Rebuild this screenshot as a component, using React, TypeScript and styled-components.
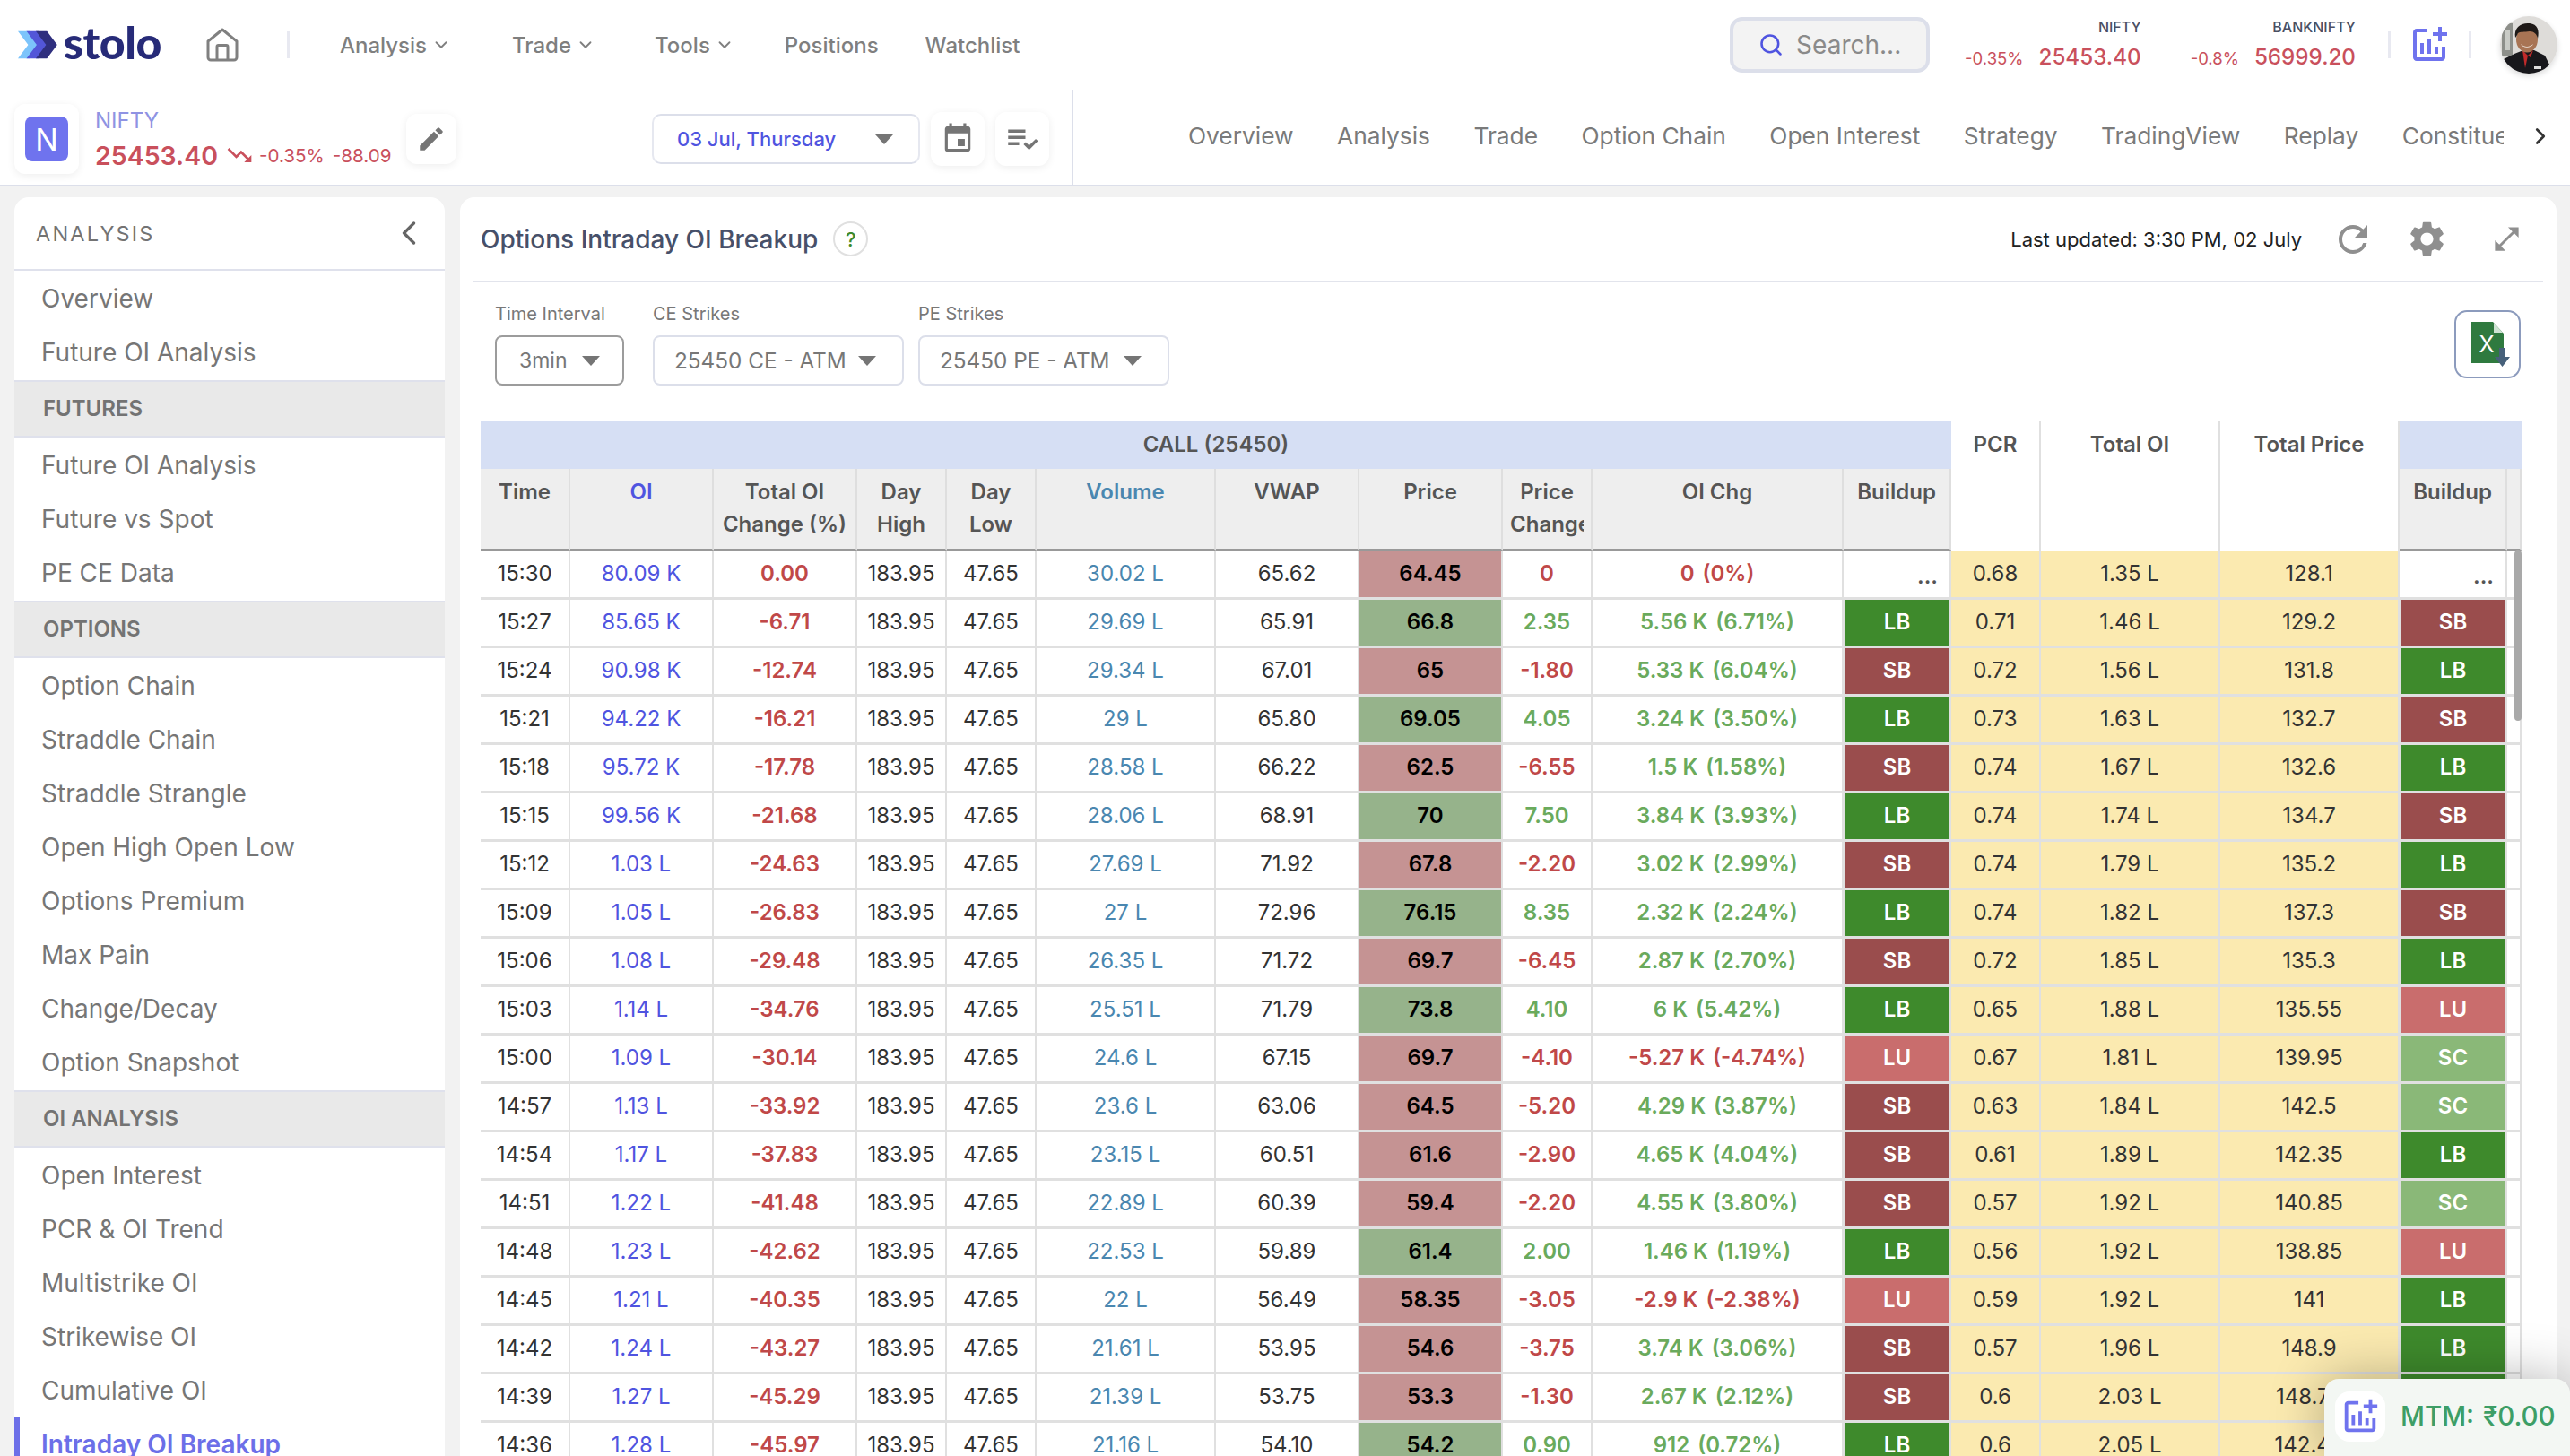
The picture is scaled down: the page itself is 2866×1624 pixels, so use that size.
import React from "react";
import styled, { createGlobalStyle } from "styled-components";
import { ChevronDown, ChevronLeft, ChevronRight, Search } from "lucide-react";
import { MdAddchart, MdEdit, MdEvent, MdOpenInFull, MdPlaylistAddCheck, MdRefresh, MdSettings, MdTrendingDown } from "react-icons/md";

const Global = createGlobalStyle`
  html, body { margin: 0; padding: 0; background: #f2f2f2; }
  * { box-sizing: border-box; }
  body { font-family: Inter, "Liberation Sans", sans-serif; }
`;

const Page = styled.div`
  position: relative; width: 2866px; height: 1624px; overflow: hidden;
  display: flex; flex-direction: column; background: #f2f2f2;
`;
const TopBar = styled.header`
  height: 100px; flex: none; display: flex; align-items: center; background: #fff;
  padding: 0 14px 0 20px; box-shadow: 0 1px 4px rgba(0,0,0,.05);
`;
const Logo = styled.div`display: flex; align-items: center; width: 160px; gap: 7px;`;
const LogoWord = styled.span`
  font-family: Lato, Inter, sans-serif; font-weight: 900; font-size: 50px; line-height: 1; letter-spacing: -0.4px;
  color: #272b78; margin-top: -6px;
`;
const HomeIcon = styled.svg`width: 36px; height: 38px; margin-left: 50px; flex: none;`;
const VDivider = styled.span<{ $ml: number }>`
  width: 3px; height: 30px; background: #e8e9f1; margin-left: ${p => p.$ml}px; flex: none;
`;
const NavList = styled.nav`display: flex; align-items: center; gap: 52px; margin-left: 56px;`;
const NavItem = styled.span<{ $mr: number }>`
  display: flex; align-items: center; gap: 5px; font-size: 24px; font-weight: 500; color: #7f7f7f;
  margin-right: ${p => p.$mr}px;
`;
const TopRight = styled.div`margin-left: auto; display: flex; align-items: center;`;
const SearchBox = styled.div`
  width: 223px; height: 62px; display: flex; align-items: center; gap: 14px; padding-left: 28px;
  background: #f3f3f3; border: 4px solid #dcdfea; border-radius: 14px; color: #8a8a8a; font-size: 28px;
`;
const Quote = styled.div<{ $ml: number }>`
  display: flex; flex-direction: column; align-items: flex-end; margin-left: ${p => p.$ml}px;
`;
const QuoteName = styled.span`font-size: 16px; font-weight: 500; color: #4a4f63; line-height: 20px;`;
const QuoteLine = styled.div`display: flex; align-items: baseline; gap: 17px; margin-top: 8px;`;
const QuotePct = styled.span`font-size: 18.5px; color: #c9505c;`;
const QuoteVal = styled.span`font-size: 24.2px; font-weight: 500; color: #c9505c; line-height: 32px;`;
const IconWrap = styled.span<{ $ml: number }>`display: flex; margin-left: ${p => p.$ml}px; color: #6f73ee;`;
const AvatarSvg = styled.svg`
  width: 64px; height: 64px; border-radius: 50%; margin-left: 32px; box-shadow: 0 3px 6px rgba(0,0,0,.14);
`;

const SubBar = styled.div`
  height: 108px; flex: none; display: flex; background: #fff; border-bottom: 2px solid #dcdfea;
`;
const SubLeft = styled.div`
  width: 1197px; flex: none; display: flex; align-items: center; padding: 4px 25px 0 16px; border-right: 2px solid #dcdfea;
`;
const WhiteCard = styled.div<{ $w: number; $h: number }>`
  width: ${p => p.$w}px; height: ${p => p.$h}px; flex: none; background: #fff; border-radius: 12px;
  box-shadow: 0 2px 10px rgba(0,0,0,.07); display: flex; align-items: center; justify-content: center; color: #757575;
`;
const NBadge = styled.div`
  width: 48px; height: 50px; border-radius: 8px; background: #6f73ee; color: #fff; font-size: 34px;
  display: flex; align-items: center; justify-content: center;
`;
const SymbolInfo = styled.div`margin-left: 18px; width: 347px; display: flex; flex-direction: column;`;
const SymbolName = styled.span`font-size: 24px; color: #8f93e3; line-height: 30px;`;
const SymbolLine = styled.div`display: flex; align-items: center; margin-top: 6px; color: #c9505c; font-size: 20.6px;`;
const SymbolPrice = styled.span`font-size: 28.5px; font-weight: 600; margin-right: 8px;`;
const SymbolPct = styled.span<{ $ml: number }>`margin-left: ${p => p.$ml}px;`;
const DateGroup = styled.div`margin-left: auto; display: flex; align-items: center; gap: 12px;`;
const DateSelect = styled.div`
  width: 299px; height: 56px; display: flex; align-items: center; justify-content: space-between;
  padding: 0 28px 0 26px; border: 2px solid #e6e8f0; border-top-color: #dcdfea; border-bottom-color: #dcdfea; border-radius: 10px;
  font-size: 22px; font-weight: 500; color: #4f54e0;
`;
const Caret = styled.span`
  width: 0; height: 0; border-left: 10px solid transparent; border-right: 10px solid transparent;
  border-top: 11px solid #757575; flex: none;
`;
const TabsArea = styled.div`flex: 1; min-width: 0; display: flex; align-items: center; padding: 0 0 3px 128px;`;
const TabsClip = styled.div`flex: 1; min-width: 0; overflow: hidden; display: flex; gap: 48.5px;`;
const Tab = styled.span`font-size: 26.3px; font-weight: 400; color: #7a7a7a; white-space: nowrap;`;
const TabChevron = styled.span`width: 74px; flex: none; display: flex; justify-content: flex-end; padding-right: 18px; color: #333;`;

const Body = styled.div`flex: 1; min-height: 0; display: flex; gap: 17px; padding: 12px 15px 0 16px;`;
const Sidebar = styled.aside`
  width: 480px; flex: none; background: #fff; border-radius: 16px 16px 0 0; overflow: hidden;
`;
const SideHead = styled.div`
  height: 82px; border-bottom: 2px solid #dfe1ec; display: flex; align-items: center; justify-content: space-between;
  padding: 0 18px 0 24px; font-size: 23.5px; letter-spacing: 2.2px; color: #737373;
`;
const SideGroup = styled.div`padding-bottom: 2px;`;
const SideItem = styled.div<{ $active?: boolean }>`
  height: 60px; display: flex; align-items: center; padding: 2px 0 0 ${p => (p.$active ? 24 : 30)}px;
  font-size: 28px; color: ${p => (p.$active ? "#6c6fe8" : "#767676")}; font-weight: ${p => (p.$active ? 600 : 400)};
  border-left: ${p => (p.$active ? "6px solid #6c6fe8" : "none")};
`;
const SideSection = styled.div`
  height: 64px; background: #e9e9e9; border-top: 2px solid #dfe1ec; border-bottom: 2px solid #dfe1ec;
  display: flex; align-items: center; padding: 0 0 2px 32px; font-size: 24px; font-weight: 600; color: #737373;
`;

const Main = styled.main`
  flex: 1; min-width: 0; background: #fff; border-radius: 16px 16px 0 0; padding: 0 15px; display: flex; flex-direction: column;
`;
const MainHead = styled.div`
  height: 95px; flex: none; border-bottom: 2px solid #e2e4ec; display: flex; align-items: center; padding: 0 23px 0 8px;
`;
const Title = styled.h1`margin: 0; font-size: 28px; font-weight: 500; color: #475069;`;
const Help = styled.span`
  width: 39px; height: 39px; margin-left: 17px; border: 2px solid #e0e0e0; border-radius: 50%; display: flex;
  align-items: center; justify-content: center; color: #3e8a2c; font-size: 22px; font-weight: 500;
`;
const Updated = styled.span`margin-left: auto; font-size: 22px; color: #222;`;
const HeadIcon = styled.span<{ $ml: number }>`display: flex; color: #8f8f8f; margin-left: ${p => p.$ml}px;`;

const FilterRow = styled.div`
  flex: none; height: 155px; display: flex; justify-content: space-between; padding: 23px 25px 0 24px;
`;
const Filters = styled.div`display: flex; gap: 16px;`;
const Filter = styled.div<{ $mr?: number }>`
  display: flex; flex-direction: column; gap: 12px; margin-right: ${p => p.$mr || 0}px;
`;
const FilterLabel = styled.span`font-size: 20px; line-height: 24px; color: #787878;`;
const SelectBox = styled.div<{ $w: number; $strong?: boolean }>`
  width: ${p => p.$w}px; height: 56px; display: flex; align-items: center; justify-content: space-between;
  padding: 0 ${p => (p.$strong ? 25 : 29)}px 0 ${p => (p.$strong ? 25 : 22)}px;
  border: 2px solid ${p => (p.$strong ? "#9c9c9c" : "#dcdfea")}; border-radius: 8px;
  font-size: ${p => (p.$strong ? 23 : 24.3)}px; color: #777;
`;
const ExcelBtn = styled.div`
  width: 74px; height: 76px; margin-top: 8px; padding-left: 7px; border: 2px solid #8c9bbd; border-radius: 14px; display: flex;
  align-items: center; justify-content: center;
`;
const TableWrap = styled.div`position: relative; flex: 1; min-height: 0; margin: 0 24px 0 8px; overflow: hidden;`;
const Table = styled.table`
  width: 2276px; table-layout: fixed; border-collapse: separate; border-spacing: 0; font-size: 24px; color: #333;
`;
const GroupTh = styled.th<{ $plain?: boolean }>`
  height: 53px; padding: 8px 0 0; vertical-align: top; line-height: 36px; font-weight: 600; color: #555; text-align: center;
  background: ${p => (p.$plain ? "#fff" : "#d6dff4")};
  border-right: ${p => (p.$plain ? "2px solid #e0e0e0" : "none")};
`;
const SubTh = styled.th<{ $c?: string }>`
  height: 92px; padding: 8px 0 0; vertical-align: top; line-height: 36px; font-weight: 600; text-align: center;
  background: #eee; color: ${p => p.$c || "#555"}; border-right: 2px solid #dedede; border-bottom: 3px solid #999;
`;
const ClipHead = styled.div`margin: 0 8px; overflow: hidden;`;
const Td = styled.td<{ $c?: string; $bg?: string; $w?: number }>`
  height: 54px; padding: 0 0 2px; text-align: center; border-right: 2px solid #e0e0e0; border-bottom: 3px solid #e0e0e0;
  color: ${p => p.$c || "#333"}; background: ${p => p.$bg || "transparent"}; font-weight: ${p => p.$w || 400};
  white-space: nowrap;
`;
const Dots = styled(Td)`text-align: right; padding: 4px 13px 0 0; font-weight: 600; color: #555;`;
const Build = styled(Td)`color: #fff; font-weight: 600; border-left: 1px solid #e0e0e0;`;
const Pct = styled.span`margin-left: 9px;`;
const Thumb = styled.span`
  position: absolute; right: 0; top: 144px; width: 8px; height: 190px; border-radius: 4px; background: #a9a9a9;
`;

const MtmCard = styled.div`
  position: absolute; left: 2592px; top: 1538px; width: 274px; height: 86px; padding: 14px 0 0 12px; background: #f3f7f3;
  border-radius: 16px 16px 0 0; box-shadow: 0 0 60px rgba(0,0,0,.3); display: flex; align-items: flex-start; gap: 17px;
  color: #3d9e66; font-size: 29.5px; font-weight: 500;
`;
const MtmIcon = styled.span`
  width: 56px; height: 56px; background: #fff; border-radius: 16px; display: flex; align-items: center; justify-content: center; color: #6f73ee;
`;
const MtmText = styled.span`line-height: 54px; white-space: nowrap; word-spacing: 2px;`;

const widths = [100, 160, 160, 100, 100, 200, 160, 160, 100, 280, 120, 100, 200, 200, 120, 16];
const G = "#6aaa5c", R = "#c04848";
const buildBg: Record<string, string> = { LB: "#3e8a2c", SB: "#9a4d4d", LU: "#c96d6d", SC: "#8ab878" };

const rows: string[][] = [
  ["15:30","80.09 K","0.00","30.02 L","65.62","64.45","r","0","0","(0%)","","0.68","1.35 L","128.1",""],
  ["15:27","85.65 K","-6.71","29.69 L","65.91","66.8","g","2.35","5.56 K","(6.71%)","LB","0.71","1.46 L","129.2","SB"],
  ["15:24","90.98 K","-12.74","29.34 L","67.01","65","r","-1.80","5.33 K","(6.04%)","SB","0.72","1.56 L","131.8","LB"],
  ["15:21","94.22 K","-16.21","29 L","65.80","69.05","g","4.05","3.24 K","(3.50%)","LB","0.73","1.63 L","132.7","SB"],
  ["15:18","95.72 K","-17.78","28.58 L","66.22","62.5","r","-6.55","1.5 K","(1.58%)","SB","0.74","1.67 L","132.6","LB"],
  ["15:15","99.56 K","-21.68","28.06 L","68.91","70","g","7.50","3.84 K","(3.93%)","LB","0.74","1.74 L","134.7","SB"],
  ["15:12","1.03 L","-24.63","27.69 L","71.92","67.8","r","-2.20","3.02 K","(2.99%)","SB","0.74","1.79 L","135.2","LB"],
  ["15:09","1.05 L","-26.83","27 L","72.96","76.15","g","8.35","2.32 K","(2.24%)","LB","0.74","1.82 L","137.3","SB"],
  ["15:06","1.08 L","-29.48","26.35 L","71.72","69.7","r","-6.45","2.87 K","(2.70%)","SB","0.72","1.85 L","135.3","LB"],
  ["15:03","1.14 L","-34.76","25.51 L","71.79","73.8","g","4.10","6 K","(5.42%)","LB","0.65","1.88 L","135.55","LU"],
  ["15:00","1.09 L","-30.14","24.6 L","67.15","69.7","r","-4.10","-5.27 K","(-4.74%)","LU","0.67","1.81 L","139.95","SC"],
  ["14:57","1.13 L","-33.92","23.6 L","63.06","64.5","r","-5.20","4.29 K","(3.87%)","SB","0.63","1.84 L","142.5","SC"],
  ["14:54","1.17 L","-37.83","23.15 L","60.51","61.6","r","-2.90","4.65 K","(4.04%)","SB","0.61","1.89 L","142.35","LB"],
  ["14:51","1.22 L","-41.48","22.89 L","60.39","59.4","r","-2.20","4.55 K","(3.80%)","SB","0.57","1.92 L","140.85","SC"],
  ["14:48","1.23 L","-42.62","22.53 L","59.89","61.4","g","2.00","1.46 K","(1.19%)","LB","0.56","1.92 L","138.85","LU"],
  ["14:45","1.21 L","-40.35","22 L","56.49","58.35","r","-3.05","-2.9 K","(-2.38%)","LU","0.59","1.92 L","141","LB"],
  ["14:42","1.24 L","-43.27","21.61 L","53.95","54.6","r","-3.75","3.74 K","(3.06%)","SB","0.57","1.96 L","148.9","LB"],
  ["14:39","1.27 L","-45.29","21.39 L","53.75","53.3","r","-1.30","2.67 K","(2.12%)","SB","0.6","2.03 L","148.75","LB"],
  ["14:36","1.28 L","-45.97","21.16 L","54.10","54.2","g","0.90","912","(0.72%)","LB","0.6","2.05 L","142.45","LB"],
];

const Avatar = () => (
  <AvatarSvg viewBox="0 0 64 64">
    <rect width="64" height="64" fill="#dedcd9" />
    <rect x="2" y="8" width="12" height="36" fill="#8d8f8a" />
    <rect x="5" y="16" width="6" height="22" fill="#c9cbc6" />
    <path d="M0 64 V50 L16 42 L26 38 H38 L50 44 L60 64 Z" fill="#17171b" />
    <path d="M25 38 L28 58 L31 44 Z" fill="#c02a2a" />
    <path d="M37 38 L34 46 L31 44 Z" fill="#c02a2a" />
    <ellipse cx="30" cy="26" rx="12" ry="14.5" fill="#a87454" />
    <path d="M17 24 C15 12 24 7 33 8 C42 9 44 16 42 25 C41 20 38 17 33 17 C27 18 22 17 20 19 C19 21 18 23 17 24 Z" fill="#1e1917" />
    <path d="M23 31 C27 35 33 35 37 31 C35 36 25 36 23 31 Z" fill="#f3ece6" />
    <rect x="38" y="56" width="8" height="3" fill="#ddd" />
  </AvatarSvg>
);

const LogoMark = () => (
  <svg width="46" height="32" viewBox="0 0 46 32">
    <polygon points="0,0 14,0 26,16 14,32 0,32 12,16" fill="#7cc4fb" />
    <polygon points="10,0 24,0 36,16 24,32 10,32 22,16" fill="#5356d8" />
    <polygon points="21,0 34,0 46,16 34,32 21,32 33,16" fill="#2f2f7e" />
  </svg>
);

const ExcelIcon = () => (
  <svg width="44" height="52" viewBox="0 0 44 52">
    <path d="M0 1 H24 L36 14 V47 H0 Z" fill="#2f7a3f" />
    <path d="M25 2 L35 13 H25 Z" fill="#cfe3d3" />
    <text x="17" y="35" textAnchor="middle" fontFamily="Inter, sans-serif" fontSize="25" fill="#fff">X</text>
    <path d="M31 30 H38 V40 H43 L34.5 51 L26 40 H31 Z" fill="#46607a" />
  </svg>
);

const navItems: [string, boolean, number][] = [["Analysis", true, 16], ["Trade", true, 14], ["Tools", true, 4], ["Positions", false, 0], ["Watchlist", false, 0]];
const tabs = ["Overview", "Analysis", "Trade", "Option Chain", "Open Interest", "Strategy", "TradingView", "Replay", "Constituents"];

const sideGroups: { title?: string; items: string[] }[] = [
  { items: ["Overview", "Future OI Analysis"] },
  { title: "FUTURES", items: ["Future OI Analysis", "Future vs Spot", "PE CE Data"] },
  { title: "OPTIONS", items: ["Option Chain", "Straddle Chain", "Straddle Strangle", "Open High Open Low", "Options Premium", "Max Pain", "Change/Decay", "Option Snapshot"] },
  { title: "OI ANALYSIS", items: ["Open Interest", "PCR & OI Trend", "Multistrike OI", "Strikewise OI", "Cumulative OI", "Intraday OI Breakup"] },
];

const heads: [string, string?][] = [["Time"], ["OI", "#4f54e0"], ["Total OI Change (%)"], ["Day High"], ["Day Low"], ["Volume", "#4a87b0"], ["VWAP"], ["Price"]];

export default function App() {
  return (
    <Page>
      <Global />
      <TopBar>
        <Logo><LogoMark /><LogoWord>stolo</LogoWord></Logo>
        <HomeIcon viewBox="0 0 36 38" fill="none" stroke="#808080" strokeWidth="3" strokeLinejoin="round">
          <path d="M2 15 L18 2 L34 15 V33 a3 3 0 0 1 -3 3 H5 a3 3 0 0 1 -3 -3 Z" />
          <path d="M12 36 V21 a1.5 1.5 0 0 1 1.5 -1.5 h9 a1.5 1.5 0 0 1 1.5 1.5 V36" />
        </HomeIcon>
        <VDivider $ml={54} />
        <NavList>
          {navItems.map(([n, d, mr]) => (
            <NavItem key={n} $mr={mr}>{n}{d && <ChevronDown size={22} strokeWidth={2} />}</NavItem>
          ))}
        </NavList>
        <TopRight>
          <SearchBox><Search size={28} color="#4f54e0" strokeWidth={2.2} />Search...</SearchBox>
          <Quote $ml={39}>
            <QuoteName>NIFTY</QuoteName>
            <QuoteLine><QuotePct>-0.35%</QuotePct><QuoteVal>25453.40</QuoteVal></QuoteLine>
          </Quote>
          <Quote $ml={55}>
            <QuoteName>BANKNIFTY</QuoteName>
            <QuoteLine><QuotePct>-0.8%</QuotePct><QuoteVal>56999.20</QuoteVal></QuoteLine>
          </Quote>
          <VDivider $ml={36} />
          <IconWrap $ml={19}><MdAddchart size={48} /></IconWrap>
          <VDivider $ml={20} />
          <Avatar />
        </TopRight>
      </TopBar>

      <SubBar>
        <SubLeft>
          <WhiteCard $w={72} $h={78}><NBadge>N</NBadge></WhiteCard>
          <SymbolInfo>
            <SymbolName>NIFTY</SymbolName>
            <SymbolLine>
              <SymbolPrice>25453.40</SymbolPrice>
              <MdTrendingDown size={32} />
              <SymbolPct $ml={6}>-0.35%</SymbolPct>
              <SymbolPct $ml={9}>-88.09</SymbolPct>
            </SymbolLine>
          </SymbolInfo>
          <WhiteCard $w={56} $h={56}><MdEdit size={34} /></WhiteCard>
          <DateGroup>
            <DateSelect>03 Jul, Thursday<Caret /></DateSelect>
            <WhiteCard $w={60} $h={60}><MdEvent size={38} /></WhiteCard>
            <WhiteCard $w={60} $h={60}><MdPlaylistAddCheck size={42} /></WhiteCard>
          </DateGroup>
        </SubLeft>
        <TabsArea>
          <TabsClip>{tabs.map(t => <Tab key={t}>{t}</Tab>)}</TabsClip>
          <TabChevron><ChevronRight size={30} strokeWidth={2.2} /></TabChevron>
        </TabsArea>
      </SubBar>

      <Body>
        <Sidebar>
          <SideHead>ANALYSIS<ChevronLeft size={44} strokeWidth={1.8} color="#666" /></SideHead>
          {sideGroups.map((g, i) => (
            <React.Fragment key={i}>
              {g.title && <SideSection>{g.title}</SideSection>}
              <SideGroup>
                {g.items.map(it => <SideItem key={it} $active={it === "Intraday OI Breakup"}>{it}</SideItem>)}
              </SideGroup>
            </React.Fragment>
          ))}
        </Sidebar>

        <Main>
          <MainHead>
            <Title>Options Intraday OI Breakup</Title>
            <Help>?</Help>
            <Updated>Last updated: 3:30 PM, 02 July</Updated>
            <HeadIcon $ml={33}><MdRefresh size={48} /></HeadIcon>
            <HeadIcon $ml={35}><MdSettings size={47} /></HeadIcon>
            <HeadIcon $ml={48}><MdOpenInFull size={35} /></HeadIcon>
          </MainHead>
          <FilterRow>
            <Filters>
              <Filter $mr={16}>
                <FilterLabel>Time Interval</FilterLabel>
                <SelectBox $w={144} $strong>3min<Caret /></SelectBox>
              </Filter>
              <Filter>
                <FilterLabel>CE Strikes</FilterLabel>
                <SelectBox $w={280}>25450 CE - ATM<Caret /></SelectBox>
              </Filter>
              <Filter>
                <FilterLabel>PE Strikes</FilterLabel>
                <SelectBox $w={280}>25450 PE - ATM<Caret /></SelectBox>
              </Filter>
            </Filters>
            <ExcelBtn><ExcelIcon /></ExcelBtn>
          </FilterRow>
          <TableWrap>
            <Table>
              <colgroup>{widths.map((w, i) => <col key={i} width={w} />)}</colgroup>
              <thead>
                <tr>
                  <GroupTh colSpan={11}>CALL (25450)</GroupTh>
                  <GroupTh $plain rowSpan={2}>PCR</GroupTh>
                  <GroupTh $plain rowSpan={2}>Total OI</GroupTh>
                  <GroupTh $plain rowSpan={2}>Total Price</GroupTh>
                  <GroupTh colSpan={2} />
                </tr>
                <tr>
                  {heads.map(([h, c]) => <SubTh key={h} $c={c}>{h}</SubTh>)}
                  <SubTh><ClipHead>Price Change</ClipHead></SubTh>
                  <SubTh>OI Chg</SubTh>
                  <SubTh>Buildup</SubTh>
                  <SubTh>Buildup</SubTh>
                  <SubTh />
                </tr>
              </thead>
              <tbody>
                {rows.map(r => {
                  const [time, oi, tot, vol, vwap, price, dir, pch, chg, pct, b1, pcr, toi, tpr, b2] = r;
                  const pc = pch.startsWith("-") || pch === "0" ? R : G;
                  const oc = chg.startsWith("-") || chg === "0" ? R : G;
                  return (
                    <tr key={time}>
                      <Td>{time}</Td>
                      <Td $c="#4f54e0">{oi}</Td>
                      <Td $c={R} $w={600}>{tot}</Td>
                      <Td>183.95</Td>
                      <Td>47.65</Td>
                      <Td $c="#4a87b0">{vol}</Td>
                      <Td>{vwap}</Td>
                      <Td $c="#000" $w={600} $bg={dir === "r" ? "#c59393" : "#96b38b"}>{price}</Td>
                      <Td $c={pc} $w={600}>{pch}</Td>
                      <Td $c={oc} $w={600}>{chg}<Pct>{pct}</Pct></Td>
                      {b1 ? <Build $bg={buildBg[b1]} $c="#fff">{b1}</Build> : <Dots>...</Dots>}
                      <Td $bg="#fbeab0">{pcr}</Td>
                      <Td $bg="#fbeab0">{toi}</Td>
                      <Td $bg="#fbeab0">{tpr}</Td>
                      {b2 ? <Build $bg={buildBg[b2]} $c="#fff">{b2}</Build> : <Dots>...</Dots>}
                      <Td />
                    </tr>
                  );
                })}
              </tbody>
            </Table>
            <Thumb />
          </TableWrap>
        </Main>
      </Body>

      <MtmCard>
        <MtmIcon><MdAddchart size={46} /></MtmIcon>
        <MtmText>MTM: ₹0.00</MtmText>
      </MtmCard>
    </Page>
  );
}
